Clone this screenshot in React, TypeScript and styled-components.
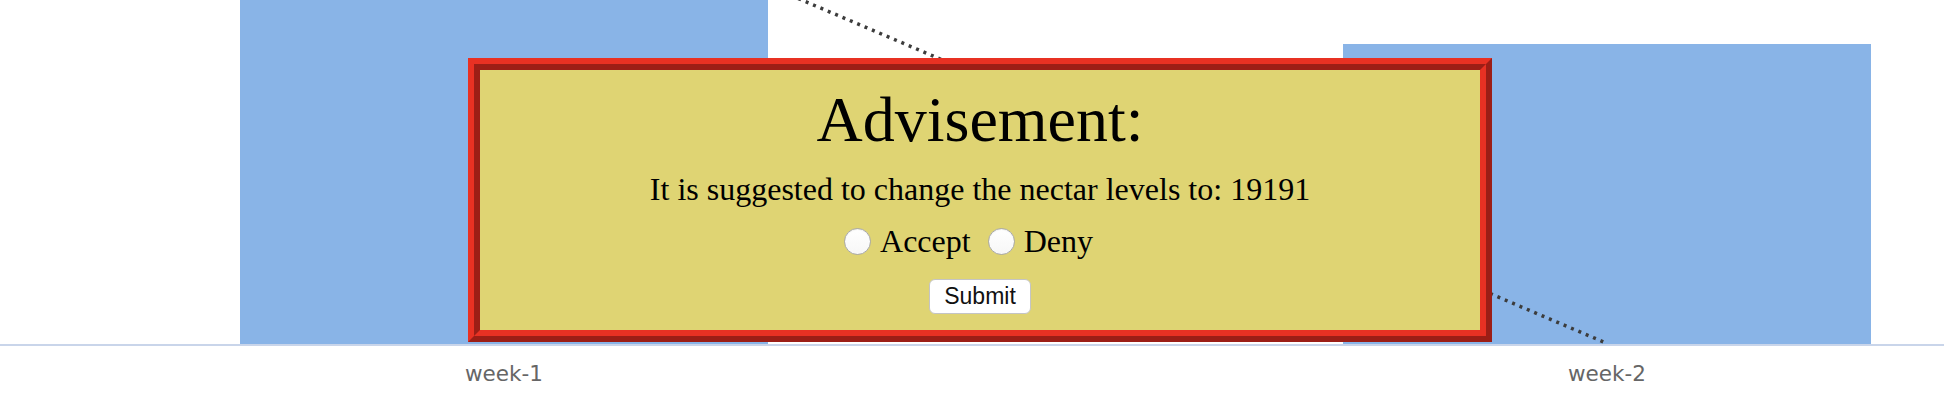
import React from "react";
import styled, { createGlobalStyle } from "styled-components";

const GlobalStyle = createGlobalStyle`
  html, body { margin: 0; padding: 0; background: #ffffff; }
  body { font-family: "Liberation Serif", "Times New Roman", serif; }
`;

const Stage = styled.div`
  position: relative;
  width: 1944px;
  height: 414px;
  overflow: hidden;
  background: #ffffff;
`;

const Plot = styled.div`
  display: grid;
  grid-template-columns: 528px 528px;
  column-gap: 575px;
  align-items: end;
  height: 344px;
  padding-left: 240px;
  border-bottom: 2px solid #c9d5ea;
`;

const Bar = styled.div<{ $h: number }>`
  height: ${(p) => p.$h}px;
  background: #89b4e7;
`;

const Labels = styled.div`
  display: grid;
  grid-template-columns: 528px 528px;
  column-gap: 575px;
  padding-left: 240px;
  padding-top: 15px;
`;

const AxisLabel = styled.span`
  text-align: center;
  font-family: "DejaVu Sans", Verdana, sans-serif;
  font-size: 21.5px;
  color: #666666;
`;

const TrendLine = styled.svg`
  position: absolute;
  left: 0;
  top: 0;
  pointer-events: none;
`;

const Frame = styled.div`
  position: absolute;
  left: 468px;
  top: 58px;
  width: 1024px;
  height: 284px;
  box-sizing: border-box;
  border: 6px solid;
  border-color: #e83123 #9c1e16 #9c1e16 #e83123;
  display: flex;
`;

const Panel = styled.form`
  flex: 1;
  box-sizing: border-box;
  border: 6px solid;
  border-color: #9c1e16 #e83123 #e83123 #9c1e16;
  background: #dfd473;
  display: flex;
  flex-direction: column;
  align-items: center;
  margin: 0;
`;

const Title = styled.h1`
  margin: 13px 0 0;
  font-family: "Liberation Serif", "Times New Roman", serif;
  font-weight: normal;
  font-size: 64px;
  line-height: normal;
  color: #000;
`;

const Message = styled.p`
  margin: 14px 0 0;
  font-family: "Liberation Serif", "Times New Roman", serif;
  font-size: 32px;
  line-height: normal;
  color: #000;
`;

const Choices = styled.div`
  margin: 15px 23px 0 0;
  display: flex;
  align-items: center;
  gap: 17px;
`;

const Choice = styled.label`
  display: flex;
  align-items: center;
  gap: 9px;
  font-family: "Liberation Serif", "Times New Roman", serif;
  font-size: 32px;
  line-height: normal;
  color: #000;
`;

const Radio = styled.input`
  appearance: none;
  -webkit-appearance: none;
  margin: 0;
  width: 27px;
  height: 27px;
  border-radius: 50%;
  box-sizing: border-box;
  border: 1.5px solid #a9a9a9;
  background: linear-gradient(#ffffff, #f7f7f7);
  box-shadow: inset 0 1px 1px rgba(0, 0, 0, 0.06);
`;

const SubmitButton = styled.button`
  margin-top: 19px;
  height: 35px;
  padding: 0 14px;
  box-sizing: border-box;
  background: #ffffff;
  border: 1.5px solid #c4c4c4;
  border-radius: 6px;
  font-family: "Liberation Sans", Arial, sans-serif;
  font-size: 23px;
  line-height: 1;
  color: #111;
`;

export default function App() {
  return (
    <>
      <GlobalStyle />
      <Stage>
        <Plot>
          <Bar $h={344} />
          <Bar $h={300} />
        </Plot>
        <Labels>
          <AxisLabel>week-1</AxisLabel>
          <AxisLabel>week-2</AxisLabel>
        </Labels>
        <TrendLine width="1944" height="414" viewBox="0 0 1944 414">
          <line
            x1="504"
            y1="-127"
            x2="1606"
            y2="343"
            stroke="#3c3c3c"
            strokeWidth="3.5"
            strokeDasharray="3 5"
          />
        </TrendLine>
        <Frame>
          <Panel onSubmit={(e) => e.preventDefault()}>
            <Title>Advisement:</Title>
            <Message>It is suggested to change the nectar levels to: 19191</Message>
            <Choices>
              <Choice>
                <Radio type="radio" name="advice" value="accept" />
                Accept
              </Choice>
              <Choice>
                <Radio type="radio" name="advice" value="deny" />
                Deny
              </Choice>
            </Choices>
            <SubmitButton type="submit">Submit</SubmitButton>
          </Panel>
        </Frame>
      </Stage>
    </>
  );
}
